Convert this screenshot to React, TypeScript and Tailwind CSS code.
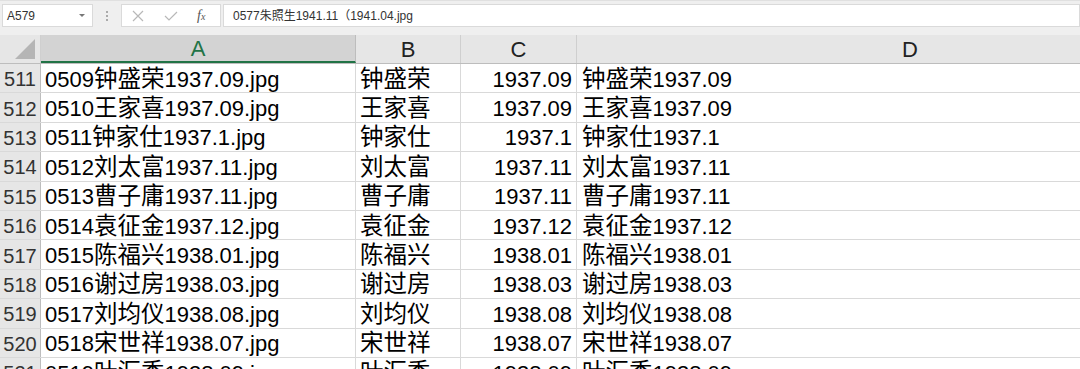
import React from "react";

const rows: [number, string, string, string][] = [
  [511, "0509钟盛荣1937.09.jpg", "钟盛荣", "1937.09"],
  [512, "0510王家喜1937.09.jpg", "王家喜", "1937.09"],
  [513, "0511钟家仕1937.1.jpg", "钟家仕", "1937.1"],
  [514, "0512刘太富1937.11.jpg", "刘太富", "1937.11"],
  [515, "0513曹子庸1937.11.jpg", "曹子庸", "1937.11"],
  [516, "0514袁征金1937.12.jpg", "袁征金", "1937.12"],
  [517, "0515陈福兴1938.01.jpg", "陈福兴", "1938.01"],
  [518, "0516谢过房1938.03.jpg", "谢过房", "1938.03"],
  [519, "0517刘均仪1938.08.jpg", "刘均仪", "1938.08"],
  [520, "0518宋世祥1938.07.jpg", "宋世祥", "1938.07"],
  [521, "0519叶汇秀1938.09.jpg", "叶汇秀", "1938.09"],
];

const font = {
  fontFamily: '"Liberation Sans", Arial, "Noto Sans CJK SC", sans-serif',
};

function Mixed({ text }: { text: string }) {
  const parts = text.match(/[\u4e00-\u9fff]+|[^\u4e00-\u9fff]+/g) || [];
  return (
    <>
      {parts.map((p, i) =>
        /[\u4e00-\u9fff]/.test(p) ? (
          <span key={i} className="text-[23.5px]">
            {p}
          </span>
        ) : (
          <span key={i}>{p}</span>
        )
      )}
    </>
  );
}

export default function App() {
  return (
    <div
      className="w-[1080px] h-[369px] overflow-hidden bg-white text-black"
      style={font}
    >
      {/* formula bar */}
      <div className="h-[35px] bg-[#efefef] border-t border-[#e0e0e0] flex items-start pt-[3px]">
        <div className="ml-[2px] w-[91px] h-[23px] bg-white border border-[#dadada] flex items-center justify-between px-[4px]">
          <span className="text-[12px] text-[#333]">A579</span>
          <svg width="8" height="5" viewBox="0 0 8 5" className="mr-[2px]">
            <path d="M1 1 L4 4 L7 1 Z" fill="#777" />
          </svg>
        </div>
        <div className="w-[28px] h-[23px] flex items-center justify-center">
          <div className="flex flex-col gap-[2px]">
            <div className="w-[2px] h-[2px] bg-[#aaa]" />
            <div className="w-[2px] h-[2px] bg-[#aaa]" />
            <div className="w-[2px] h-[2px] bg-[#aaa]" />
          </div>
        </div>
        <div className="w-[100px] h-[23px] bg-white border border-[#dadada] flex items-center">
          <svg width="12" height="12" viewBox="0 0 12 12" className="ml-[10px]">
            <path d="M1 1 L11 11 M11 1 L1 11" stroke="#b8b8b8" strokeWidth="1.2" />
          </svg>
          <svg width="14" height="12" viewBox="0 0 14 12" className="ml-[20px]">
            <path d="M1 6 L5 10 L13 2" stroke="#b8b8b8" strokeWidth="1.2" fill="none" />
          </svg>
          <span
            className="ml-[19px] text-[14px] italic text-[#555]"
            style={{ fontFamily: '"Liberation Serif", serif' }}
          >
            f<span className="text-[10px]">x</span>
          </span>
        </div>
        <div className="ml-[2px] flex-1 h-[23px] bg-white border border-[#dadada] flex items-center pl-[9px]">
          <span
            className="text-[12px] text-[#333]"
            style={{ fontFamily: '"Liberation Sans", "Noto Sans CJK SC", sans-serif' }}
          >
            0577朱照生1941.11（1941.04.jpg
          </span>
        </div>
      </div>

      {/* header row */}
      <div className="flex h-[29px] bg-[#e6e6e6] border-b border-[#bdbdbd]">
        <div className="w-[41px] h-full relative border-r border-[#cfcfcf] shrink-0">
          <svg width="22" height="22" viewBox="0 0 22 22" className="absolute right-[4px] bottom-[3px]">
            <path d="M21 1 L21 21 L1 21 Z" fill="#b5b5b5" />
          </svg>
        </div>
        <div className="w-[315px] shrink-0 h-full bg-[#d3d3d3] border-b-2 border-[#217346] border-r border-r-[#bdbdbd] flex items-center justify-center text-[22px] text-[#217346] -mb-px">
          A
        </div>
        <div className="w-[105px] shrink-0 h-full border-r border-[#cfcfcf] flex items-center justify-center text-[22px] text-[#222]">
          B
        </div>
        <div className="w-[116px] shrink-0 h-full border-r border-[#cfcfcf] flex items-center justify-center text-[22px] text-[#222]">
          C
        </div>
        <div className="w-[666px] shrink-0 h-full flex items-center justify-center text-[22px] text-[#222]">
          D
        </div>
      </div>

      {/* rows */}
      {rows.map(([n, a, b, c]) => (
        <div key={n} className="flex h-[29.4px] border-b border-[#d9d9d9]">
          <div className="w-[41px] shrink-0 bg-[#e6e6e6] border-r border-[#bdbdbd] flex items-center justify-center pt-[2px] text-[20px] text-[#333]">
            {n}
          </div>
          <div className="w-[315px] shrink-0 border-r border-[#d9d9d9] flex items-center pl-[4px] pt-[2px] text-[22px] whitespace-nowrap">
            <Mixed text={a} />
          </div>
          <div className="w-[105px] shrink-0 border-r border-[#d9d9d9] flex items-center pl-[4px] pt-[2px] text-[22px] whitespace-nowrap">
            <Mixed text={b} />
          </div>
          <div className="w-[116px] shrink-0 border-r border-[#d9d9d9] flex items-center justify-end pr-[4px] pt-[2px] text-[22px] whitespace-nowrap">
            {c}
          </div>
          <div className="w-[666px] shrink-0 flex items-center pl-[5px] pt-[2px] text-[22px] whitespace-nowrap">
            <Mixed text={b + c} />
          </div>
        </div>
      ))}
    </div>
  );
}
